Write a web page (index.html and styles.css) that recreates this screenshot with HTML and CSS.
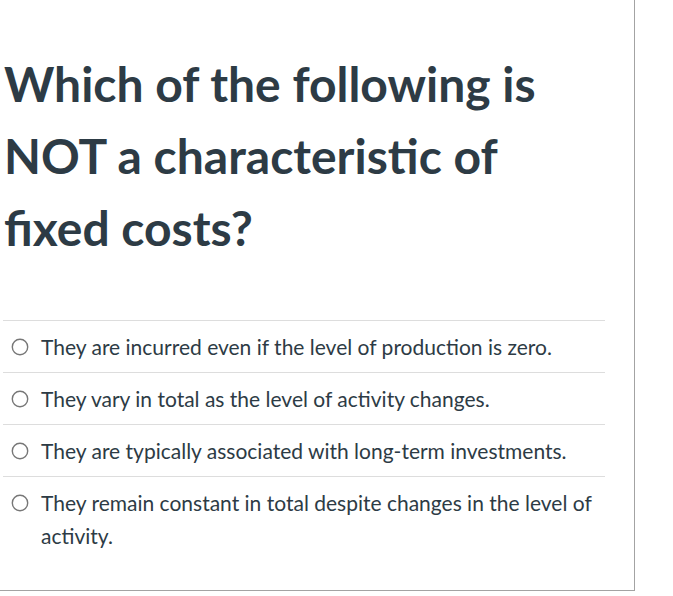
FILE: index.html
```html
<!DOCTYPE html>
<html>
<head>
<meta charset="utf-8">
<link rel="stylesheet" href="styles.css">
</head>
<body>
<div class="panel">
  <h1 class="question">Which of the following is NOT a characteristic of fixed costs?</h1>
  <ul class="answers">
    <li class="answer">
      <svg class="radio" width="18" height="18" viewBox="0 0 18 18"><circle cx="9" cy="9" r="7.7" fill="#fff" stroke="#777" stroke-width="1.4"/></svg>
      <span class="label">They are incurred even if the level of production is zero.</span>
    </li>
    <li class="answer">
      <svg class="radio" width="18" height="18" viewBox="0 0 18 18"><circle cx="9" cy="9" r="7.7" fill="#fff" stroke="#777" stroke-width="1.4"/></svg>
      <span class="label">They vary in total as the level of activity changes.</span>
    </li>
    <li class="answer">
      <svg class="radio" width="18" height="18" viewBox="0 0 18 18"><circle cx="9" cy="9" r="7.7" fill="#fff" stroke="#777" stroke-width="1.4"/></svg>
      <span class="label">They are typically associated with long-term investments.</span>
    </li>
    <li class="answer">
      <svg class="radio" width="18" height="18" viewBox="0 0 18 18"><circle cx="9" cy="9" r="7.7" fill="#fff" stroke="#777" stroke-width="1.4"/></svg>
      <span class="label">They remain constant in total despite changes in the level of activity.</span>
    </li>
  </ul>
</div>
</body>
</html>
```
FILE: styles.css
```css
html, body {
  margin: 0;
  padding: 0;
  background: #fff;
}
body {
  font-family: Lato, "Open Sans", sans-serif;
  color: #2d3b45;
}
.panel {
  width: 635px;
  height: 591px;
  box-sizing: border-box;
  border-right: 1px solid #a3a3a3;
  border-bottom: 1px solid #a3a3a3;
  padding-top: 48px;
}
.question {
  margin: 0;
  padding-left: 4px;
  width: 560px;
  font-size: 48px;
  line-height: 72px;
  font-weight: 700;
}
.answers {
  list-style: none;
  margin: 56px 0 0 3px;
  padding: 0;
  width: 602px;
}
.answer {
  display: flex;
  align-items: flex-start;
  border-top: 1px solid #dddddd;
  padding: 9px 0 9px 8px;
  font-size: 21px;
  line-height: 33px;
}
.radio {
  flex: none;
  margin-top: 8px;
  margin-right: 12px;
}
.label {
  flex: 1;
  padding-right: 10px;
}
```
